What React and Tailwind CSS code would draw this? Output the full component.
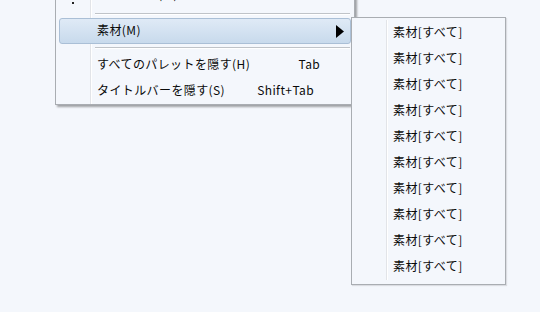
import { useState } from 'react';

const font = { fontFamily: '"Noto Sans CJK JP", "Noto Sans", sans-serif' };

const MenuItem = ({ label, shortcut, active, arrow }) => (
    <div
        className={`h-[26px] flex items-center pb-[3px] border rounded-[3px] ${active
            ? 'border-[#aabfd6] bg-gradient-to-b from-[#dfeaf6] to-[#c8daec]'
            : 'border-transparent'
            }`}
    >
        <div className="w-[37px] shrink-0" />
        <span className="flex-1 text-[12px] tracking-[0.4px] text-[#0a0a0a] whitespace-nowrap">{label}</span>
        <span className="w-[70px] shrink-0 text-right text-[12px] tracking-[0.4px] text-[#0a0a0a] whitespace-nowrap">{shortcut}</span>
        <div className="w-[36px] shrink-0 flex items-center pl-[22px] pt-[3px]">
            {arrow && (
                <svg width="8" height="13" viewBox="0 0 8 13">
                    <path d="M0 0 L8 6.5 L0 13 Z" fill="#000" />
                </svg>
            )}
        </div>
    </div>
);

const Separator = () => (
    <div className="h-[8px] flex flex-col justify-center pl-[36px] pr-[1px]">
        <div className="h-[1px] bg-[#bfc3c8]" />
        <div className="h-[1px] bg-white" />
    </div>
);

export default function App() {
    const [items] = useState(Array.from({ length: 10 }, () => '素材[すべて]'));

    return (
        <div className="relative w-[540px] h-[312px] bg-[#f4f7fc] overflow-hidden" style={font}>
            {/* Main menu */}
            <div className="absolute left-[55px] top-[-19px] w-[300px] border border-[#a9adb2] bg-[#f4f7fc] pt-[2px] pb-0 px-[3px] shadow-[2px_2px_2px_rgba(0,0,0,0.35)]">
                <div className="absolute left-[34px] top-0 bottom-0 w-[1px] bg-[#e2e4e8]" />
                <div className="absolute left-[35px] top-0 bottom-0 w-[1px] bg-white" />
                <div className="relative">
                    <div className="h-[26px] flex items-center relative">
                        <div className="absolute left-[13px] top-[18px] w-[2px] h-[2px] bg-[#222]" />
                        <div className="w-[37px] shrink-0" />
                        <span className="text-[12px] tracking-[0.4px] text-[#0a0a0a] relative top-[-3px]">ウィンドウ(W)</span>
                    </div>
                    <Separator />
                    <MenuItem label="素材(M)" active arrow />
                    <Separator />
                    <MenuItem label="すべてのパレットを隠す(H)" shortcut="Tab" />
                    <MenuItem label="タイトルバーを隠す(S)" shortcut="Shift+Tab" />
                </div>
            </div>

            {/* Submenu */}
            <div className="absolute left-[351px] top-[17px] w-[155px] border border-[#a9adb2] bg-[#f4f7fc] pt-[2px] pb-[4px] px-[3px] shadow-[1px_1px_1px_rgba(0,0,0,0.1)]">
                <div className="absolute left-[34px] top-[2px] bottom-[4px] w-[1px] bg-[#e2e4e8]" />
                <div className="absolute left-[35px] top-[2px] bottom-[4px] w-[1px] bg-white" />
                <div className="relative">
                    {items.map((label, i) => (
                        <div key={i} className="h-[26px] flex items-center pb-[2px]">
                            <div className="w-[38px] shrink-0" />
                            <span className="text-[12px] tracking-[0.4px] text-[#0a0a0a] whitespace-nowrap">{label}</span>
                        </div>
                    ))}
                </div>
            </div>
        </div>
    );
}
